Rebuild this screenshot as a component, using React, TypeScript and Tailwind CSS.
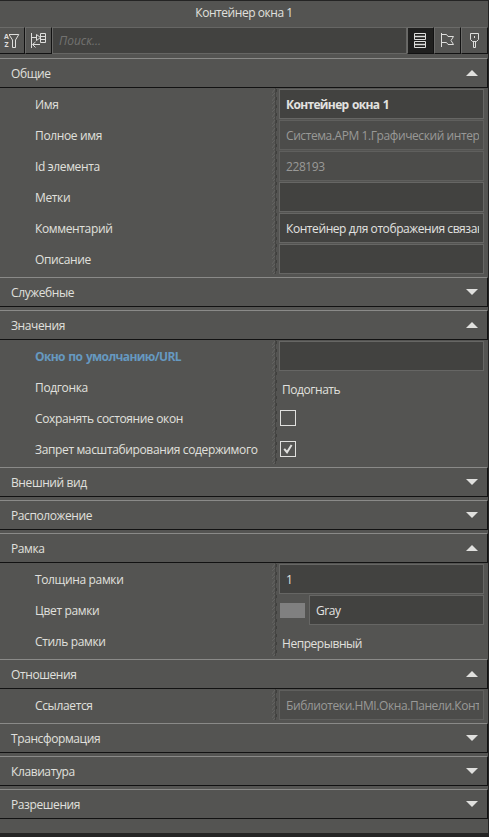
import { useState } from "react";
import type { ReactNode } from "react";
import clsx from "clsx";

type Field =
  | { label: string; kind: "input"; value: string; bold?: boolean; readOnly?: boolean; changed?: boolean }
  | { label: string; kind: "text"; value: string }
  | { label: string; kind: "check"; checked: boolean }
  | { label: string; kind: "color"; value: string };

interface Group {
  title: string;
  open: boolean;
  fields: Field[];
}

const GROUPS: Group[] = [
  {
    title: "Общие",
    open: true,
    fields: [
      { label: "Имя", kind: "input", value: "Контейнер окна 1", bold: true },
      { label: "Полное имя", kind: "input", value: "Система.АРМ 1.Графический интерфейс", readOnly: true },
      { label: "Id элемента", kind: "input", value: "228193", readOnly: true },
      { label: "Метки", kind: "input", value: "" },
      { label: "Комментарий", kind: "input", value: "Контейнер для отображения связанных окон" },
      { label: "Описание", kind: "input", value: "" },
    ],
  },
  { title: "Служебные", open: false, fields: [] },
  {
    title: "Значения",
    open: true,
    fields: [
      { label: "Окно по умолчанию/URL", kind: "input", value: "", changed: true },
      { label: "Подгонка", kind: "text", value: "Подогнать" },
      { label: "Сохранять состояние окон", kind: "check", checked: false },
      { label: "Запрет масштабирования содержимого", kind: "check", checked: true },
    ],
  },
  { title: "Внешний вид", open: false, fields: [] },
  { title: "Расположение", open: false, fields: [] },
  {
    title: "Рамка",
    open: true,
    fields: [
      { label: "Толщина рамки", kind: "input", value: "1" },
      { label: "Цвет рамки", kind: "color", value: "Gray" },
      { label: "Стиль рамки", kind: "text", value: "Непрерывный" },
    ],
  },
  {
    title: "Отношения",
    open: true,
    fields: [{ label: "Ссылается", kind: "input", value: "Библиотеки.HMI.Окна.Панели.Контейнер", readOnly: true }],
  },
  { title: "Трансформация", open: false, fields: [] },
  { title: "Клавиатура", open: false, fields: [] },
  { title: "Разрешения", open: false, fields: [] },
];

function SortFilterIcon() {
  return (
    <span className="flex">
      <span className="flex w-[5px] flex-col text-[7px] leading-[8px] font-bold tracking-normal text-[#dededc]">
        <span>A</span>
        <span>Z</span>
      </span>
      <svg width="11" height="16" viewBox="0 0 11 16" fill="none" stroke="#dededc">
        <path d="M0 1.5h9.8L6.5 7v7.5h-3V7L.3 2" />
      </svg>
    </span>
  );
}

function TreeIcon() {
  return (
    <svg width="16" height="16" viewBox="0 0 16 16" fill="none" stroke="#dededc">
      <path d="M.5 0v15M.5 4.5H5M5.5 1.5v6l4-3zM9.5.5h5v9h-5zM9.5 3.5h5M9.5 6.5h5M2 11.5h7M4.5 9l-3 2.5 3 3" />
    </svg>
  );
}

function ListIcon() {
  return (
    <svg width="12" height="15" viewBox="0 0 12 15" fill="none" stroke="#dededc">
      <path d="M.5.5h11v6H.5zM.5 8.5h11v6H.5z" />
      <path d="M0 3.5h12M0 11.5h12" strokeWidth="1.6" />
    </svg>
  );
}

function FlagIcon() {
  return (
    <svg width="14" height="15" viewBox="0 0 14 15" fill="none" stroke="#dededc">
      <path d="M.5 0v14M.5 1.5h5l1.5 2h5.5l-2.5 4 2.5 4H7l-1.5-2h-5" />
    </svg>
  );
}

function PinIcon() {
  return (
    <svg width="9" height="15" viewBox="0 0 9 15" fill="none" stroke="#dededc">
      <path d="M.5.5h8v6l-2 2h-4l-2-2zM3.5 8.5v6h2v-6" />
      <path d="M4 3h1v2H4z" fill="#dededc" stroke="none" />
    </svg>
  );
}

function ToolButton({ children, className, label }: { children: ReactNode; className?: string; label: string }) {
  return (
    <button
      aria-label={label}
      className={clsx(
        "flex h-[27px] shrink-0 items-center border-t border-b border-t-[#6b6b69] border-r border-b-[#121212] border-r-[#121212]",
        className,
      )}
    >
      {children}
    </button>
  );
}

function TextBox({ value, bold, readOnly }: { value: string; bold?: boolean; readOnly?: boolean }) {
  return (
    <div
      className={clsx(
        "mt-px flex h-[30px] min-w-0 flex-1 items-center border px-1 pt-0.5",
        readOnly ? "border-[#5f5f5d] bg-[#4c4c4a] text-[#999997]" : "border-[#666664] bg-[#424240] text-[#e2e2e0]",
      )}
    >
      <span
        className={clsx(
          "w-full overflow-hidden pl-0.5 whitespace-nowrap",
          bold ? "font-bold tracking-[-0.66px] [word-spacing:1px]" : "tracking-[-0.42px]",
        )}
      >
        {value}
      </span>
    </div>
  );
}

function FieldEditor({ field }: { field: Field }) {
  switch (field.kind) {
    case "input":
      return <TextBox value={field.value} bold={field.bold} readOnly={field.readOnly} />;
    case "text":
      return <span className="mt-[7px] ml-[3px] self-center tracking-[-0.45px]">{field.value}</span>;
    case "color":
      return (
        <>
          <div className="mt-0.5 mr-1 ml-px h-[15px] w-[25px] self-center bg-[#808080]" />
          <TextBox value={field.value} />
        </>
      );
    case "check":
      return (
        <div className="ml-px flex size-4 items-center justify-center self-center border border-[#e0e0de]">
          {field.checked && (
            <svg width="10" height="10" viewBox="0 0 10 10" fill="none" stroke="#e0e0de" strokeWidth="2">
              <path d="M1.2 4.8l2.8 3.4L8.6 1" />
            </svg>
          )}
        </div>
      );
  }
}

function Splitter() {
  return (
    <svg width="5" height="31" className="shrink-0" fill="none">
      <defs>
        <pattern id="grip" width="5" height="8" patternUnits="userSpaceOnUse">
          <path d="M3.5 0v8" stroke="#444442" />
          <path d="M0 5l3-4M0 8l3-3" stroke="#636361" />
          <path d="M4.5 1v3" stroke="#3f3f3d" />
        </pattern>
      </defs>
      <rect width="5" height="31" fill="url(#grip)" />
    </svg>
  );
}

function FieldRow({ field }: { field: Field }) {
  const changed = field.kind === "input" && field.changed;
  return (
    <div className="flex h-[31px] pr-1">
      <div
        className={clsx(
          "flex w-[272px] items-center pt-[3px] pl-[35px] whitespace-nowrap",
          changed && "font-bold tracking-[-0.62px] text-[#6699c0] [word-spacing:1px]",
        )}
      >
        {field.label}
      </div>
      <Splitter />
      <div className="ml-0.5 flex min-w-0 flex-1">
        <FieldEditor field={field} />
      </div>
    </div>
  );
}

export default function App() {
  const [open, setOpen] = useState(GROUPS.map((g) => g.open));

  const toggle = (index: number) => setOpen((prev) => prev.map((v, i) => (i === index ? !v : v)));

  return (
    <div className="h-[837px] w-[489px] overflow-hidden border-t border-r border-b-4 border-[#242424] bg-[#545452] font-['Open_Sans','Noto_Sans',sans-serif] text-[12px] leading-4 tracking-[-0.36px] text-[#e0e0de]">
      <div className="flex h-[26px] items-center justify-center pb-0.5 tracking-[-0.45px]">Контейнер окна 1</div>

      <div className="mb-1 flex">
        <ToolButton label="Сортировка" className="w-[25px] pl-1">
          <SortFilterIcon />
        </ToolButton>
        <ToolButton label="Дерево" className="w-[27px] border-l border-l-[#6b6b69] pl-[5px]">
          <TreeIcon />
        </ToolButton>
        <div className="flex h-[27px] min-w-0 flex-1 items-center border border-[#666664] bg-[#424240] px-1.5 pt-px tracking-normal text-[#727270] italic">
          Поиск...
        </div>
        <ToolButton label="Категории" className="w-[27px] border-l border-l-[#6b6b69] bg-[#20201f] pl-1.5">
          <ListIcon />
        </ToolButton>
        <ToolButton label="Флаг" className="w-[27px] border-l border-l-[#6b6b69] pl-1.5">
          <FlagIcon />
        </ToolButton>
        <ToolButton label="Закрепить" className="w-[27px] border-l border-l-[#6b6b69] pl-2">
          <PinIcon />
        </ToolButton>
      </div>

      {GROUPS.map((group, i) => (
        <section key={group.title} className="mb-[3px]">
          <button
            onClick={() => toggle(i)}
            className="flex h-[30px] w-full items-center justify-between border-t border-r border-b border-t-[#8a8a88] border-r-[#121212] border-b-[#121212] pt-px pr-[9px] pl-[11px] tracking-[-0.4px]"
          >
            <span className="pt-px">{group.title}</span>
            <svg width="12" height="6" fill="#e0e0de" className="mb-px">
              <path d={open[i] ? "M0 6L6 0l6 6z" : "M0 0h12L6 6z"} />
            </svg>
          </button>
          {open[i] && group.fields.map((field) => <FieldRow key={field.label} field={field} />)}
        </section>
      ))}
    </div>
  );
}
